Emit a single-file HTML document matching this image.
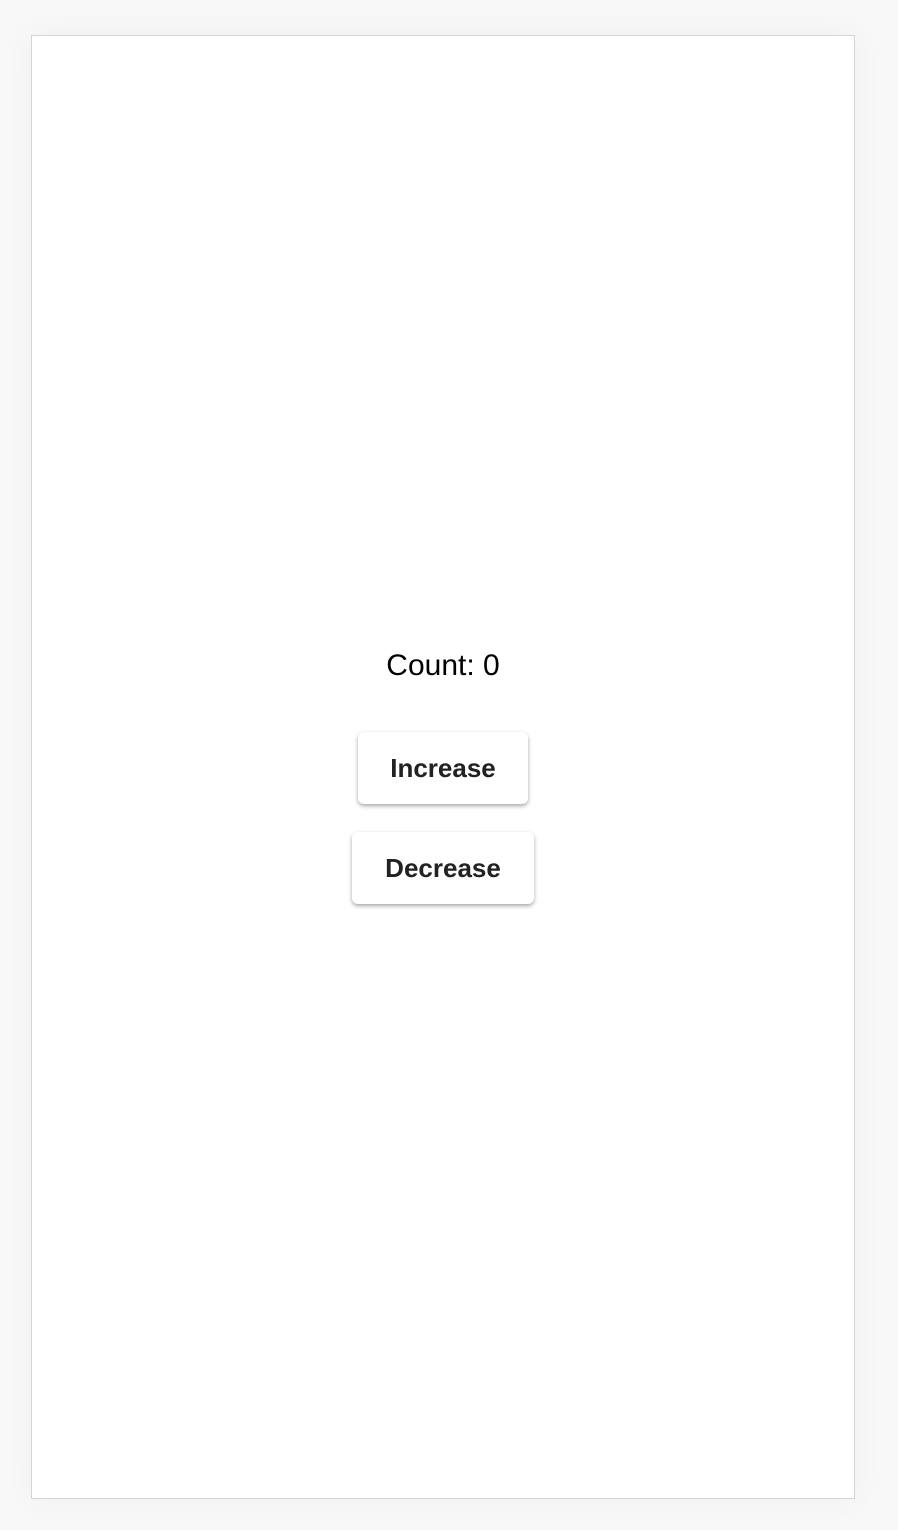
<!DOCTYPE html>
<html><head><style>
html,body{margin:0;padding:0;background:#f8f8f8;width:898px;height:1530px;overflow:hidden;font-family:"Liberation Sans",sans-serif;}
.frame{position:absolute;left:31px;top:35px;width:822px;height:1462px;background:#fff;border:1px solid #d4d4d4;box-shadow:0 0 30px rgba(0,0,0,0.04);}
.count{position:absolute;left:0;width:886px;top:649px;text-align:center;font-size:30px;color:#000;}
.btn{position:absolute;background:#fff;border-radius:6px;box-shadow:0 2px 4px rgba(0,0,0,0.35);font-weight:bold;font-size:26px;color:#222;text-align:center;line-height:72px;height:72px;}
</style></head><body>
<div class="frame"></div>
<div class="count">Count: 0</div>
<div class="btn" style="left:358px;top:732px;width:170px;">Increase</div>
<div class="btn" style="left:352px;top:832px;width:182px;">Decrease</div>
</body></html>
